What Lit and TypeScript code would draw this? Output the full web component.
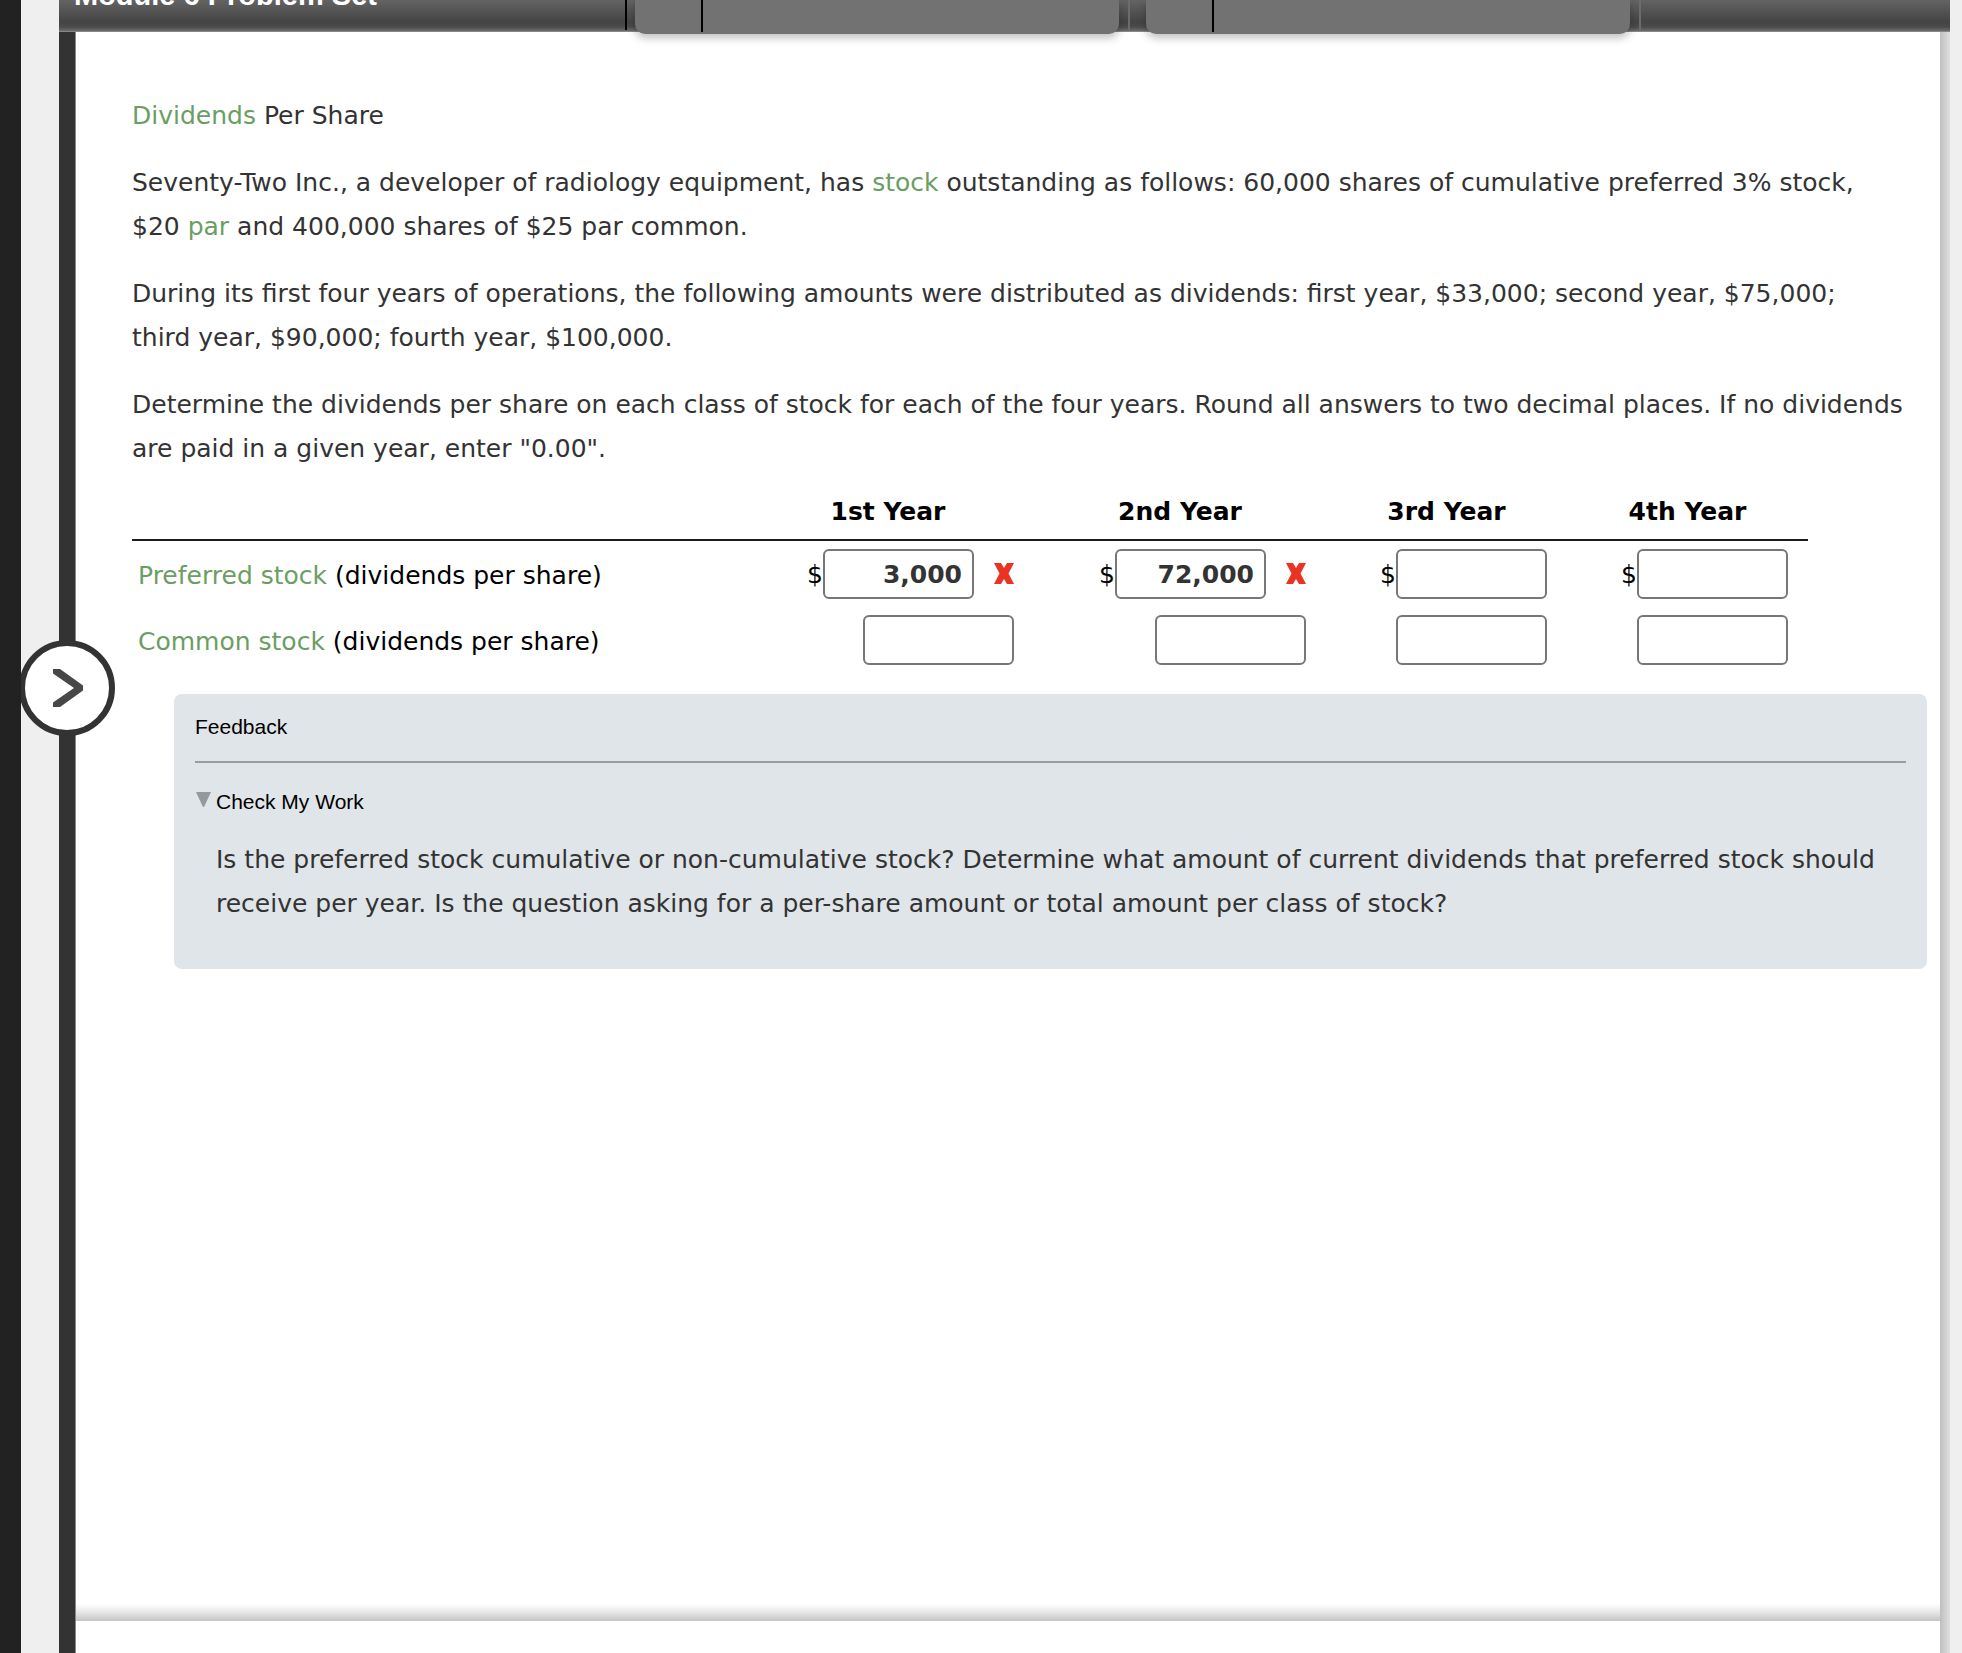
import { LitElement, html, css, svg, nothing } from "lit";
import { customElement, property } from "lit/decorators.js";

interface Answer {
  value: string;
  wrong: boolean;
}

interface Row {
  id: string;
  term: string;
  currency: boolean;
  answers: Answer[];
}

const YEARS = ["1st Year", "2nd Year", "3rd Year", "4th Year"];

const blank = (): Answer => ({ value: "", wrong: false });

const ROWS: Row[] = [
  {
    id: "preferred",
    term: "Preferred stock",
    currency: true,
    answers: [
      { value: "3,000", wrong: true },
      { value: "72,000", wrong: true },
      blank(),
      blank(),
    ],
  },
  {
    id: "common",
    term: "Common stock",
    currency: false,
    answers: [blank(), blank(), blank(), blank()],
  },
];

@customElement("assignment-header")
export class AssignmentHeader extends LitElement {
  static styles = css`
    :host {
      display: block;
    }
    .bar {
      display: flex;
      align-items: flex-start;
      height: 32px;
      background: linear-gradient(#636363 0, #444 22px, #4b4b4b 27px, #6e6e6e 31px, #a0a0a0 32px);
    }
    .title {
      box-sizing: border-box;
      flex: 0 0 568px;
      height: 30px;
      padding-left: 15px;
      border-right: 2px solid #000;
    }
    .title h1 {
      margin: -15px 0 0;
      color: #fff;
      font: bold 29px/20px "Liberation Sans", Arial, sans-serif;
      white-space: nowrap;
    }
    .tab {
      flex: 0 0 484px;
      height: 34px;
      margin-left: 8px;
      border-radius: 0 0 10px 10px;
      background: #727272;
      box-shadow: 0 4px 8px rgba(0, 0, 0, 0.25);
    }
    .tab-icon {
      box-sizing: border-box;
      width: 68px;
      height: 32px;
      border-right: 2px solid #000;
    }
    .divider {
      flex: 0 0 2px;
      height: 30px;
      margin: 0 8px 0 9px;
      background: #6c6c6c;
    }
  `;

  render() {
    return html`
      <header class="bar">
        <div class="title"><h1>Module 6 Problem Set</h1></div>
        <div class="tab"><div class="tab-icon"></div></div>
        <div class="divider"></div>
        <div class="tab"><div class="tab-icon"></div></div>
        <div class="divider"></div>
      </header>
    `;
  }
}

@customElement("answer-table")
export class AnswerTable extends LitElement {
  @property({ attribute: false }) rows: Row[] = [];

  static styles = css`
    :host {
      display: block;
    }
    .grid {
      width: 1676px;
      max-width: 100%;
      border-collapse: separate;
      border-spacing: 0;
      table-layout: fixed;
      color: #000;
      font: inherit;
    }
    .label-col {
      width: 610px;
    }
    .wide-col {
      width: 292px;
    }
    th {
      padding: 0;
    }
    .year {
      height: 48px;
      padding-bottom: 5px;
      border-bottom: 2px solid #1c1c1c;
      font-weight: bold;
      line-height: 44px;
      text-align: center;
      vertical-align: bottom;
    }
    .label {
      height: 62px;
      padding: 4px 0 0 6px;
      font-weight: normal;
      text-align: left;
    }
    .answer {
      height: 66px;
      padding: 0 20px 0 0;
    }
    .field {
      display: flex;
      align-items: center;
      justify-content: flex-end;
    }
    .currency {
      padding-top: 2px;
    }
    .input {
      box-sizing: border-box;
      width: 151px;
      height: 50px;
      padding: 0 10px;
      border: 2px solid #777;
      border-radius: 6px;
      background: #fff;
      color: #333;
      font: inherit;
      font-weight: bold;
      text-align: right;
    }
    .mark {
      width: 20px;
      height: 22px;
      margin-left: 20px;
    }
    a {
      color: #6a9e63;
      text-decoration: none;
    }
  `;

  private mark() {
    return html`<svg class="mark" viewBox="0 0 20 22" role="img" aria-label="Incorrect">
      ${svg`<path fill="#ea3323" d="M0 0H7L10 5L13 0H20L14.500 10.500L20 21H13L10 16L7 21H0L5.500 10.500Z" />`}
    </svg>`;
  }

  render() {
    return html`
      <table class="grid">
        <colgroup>
          <col class="label-col" />
          <col class="wide-col" />
          <col class="wide-col" />
          <col />
          <col />
        </colgroup>
        <thead>
          <tr>
            <td class="year"></td>
            ${YEARS.map((year) => html`<th class="year" scope="col">${year}</th>`)}
          </tr>
        </thead>
        <tbody>
          ${this.rows.map(
            (row) => html`<tr>
              <th class="label" scope="row"><a href="#${row.id}">${row.term}</a> (dividends per share)</th>
              ${row.answers.map(
                (answer, i) => html`<td class="answer">
                  <div class="field">
                    ${row.currency ? html`<label class="currency" for="${row.id}-${i}">$</label>` : nothing}
                    <input
                      class="input"
                      id="${row.id}-${i}"
                      type="text"
                      aria-label="${row.term}, ${YEARS[i]}"
                      .value=${answer.value}
                    />
                    ${answer.wrong ? this.mark() : nothing}
                  </div>
                </td>`
              )}
            </tr>`
          )}
        </tbody>
      </table>
    `;
  }
}

@customElement("feedback-panel")
export class FeedbackPanel extends LitElement {
  static styles = css`
    :host {
      display: block;
    }
    .panel {
      padding: 20px 21px 35px;
      border-radius: 8px;
      background: #e0e5e9;
    }
    .heading {
      margin: 0;
      padding-bottom: 21px;
      border-bottom: 2px solid #989da0;
      color: #000;
      font: 21px/26px "Liberation Sans", Arial, sans-serif;
    }
    .toggle {
      display: flex;
      align-items: center;
      gap: 5px;
      margin-top: 25px;
      padding: 0;
      border: 0;
      background: none;
      color: #000;
      font: 21px/28px "Liberation Sans", Arial, sans-serif;
    }
    .arrow {
      width: 16px;
      height: 16px;
      margin-bottom: 4px;
    }
    .text {
      margin: 22px 0 0;
      padding: 0 0 8px 21px;
    }
  `;

  render() {
    return html`
      <section class="panel">
        <h2 class="heading">Feedback</h2>
        <button class="toggle" type="button" aria-expanded="true">
          <svg class="arrow" viewBox="0 0 16 16" aria-hidden="true">
            <path fill="#949a9c" d="M1 0H16L9.500 14Q8.500 16 7.500 14Z" />
          </svg>
          Check My Work
        </button>
        <p class="text">
          Is the preferred stock cumulative or non-cumulative stock? Determine what amount of current dividends that
          preferred stock should receive per year. Is the question asking for a per-share amount or total amount per
          class of stock?
        </p>
      </section>
    `;
  }
}

@customElement("app-root")
export class AppRoot extends LitElement {
  static styles = css`
    :host {
      display: block;
      color: #333;
      font: 25px/44px Verdana, "DejaVu Sans", sans-serif;
    }
    .page {
      display: flex;
      min-height: 100vh;
      background: #efefef;
    }
    .rail {
      position: relative;
      z-index: 2;
      flex: 0 0 21px;
      background: #222;
    }
    .sheet {
      display: flex;
      flex: 1;
      flex-direction: column;
      min-width: 0;
      margin: 0 12px 0 38px;
    }
    .header {
      position: relative;
      z-index: 1;
    }
    .body {
      display: flex;
      flex: 1;
    }
    .spine {
      position: relative;
      flex: 0 0 16px;
      border-right: 1px solid #888;
      background: #333;
    }
    .expand {
      position: absolute;
      top: 608px;
      left: -40px;
      box-sizing: border-box;
      width: 96px;
      height: 96px;
      padding: 0;
      border: 6px solid #333;
      border-radius: 50%;
      background: #fff;
    }
    .chevron {
      display: block;
      width: 84px;
      height: 84px;
    }
    .column {
      display: flex;
      flex: 1;
      flex-direction: column;
      min-width: 0;
      background: #fff;
    }
    .edge {
      flex: 0 0 10px;
      background: linear-gradient(90deg, #bebebe, #e0e0e0);
    }
    .question {
      flex: 1;
      padding: 62px 13px 0 56px;
    }
    .question p {
      margin: 0 0 23px;
    }
    .question .last {
      margin-bottom: 14px;
    }
    .feedback {
      margin: 21px 0 40px 42px;
    }
    .fade {
      height: 17px;
      background: linear-gradient(#fff, #e6e6e6 50%, #c4c4c4);
    }
    .footer {
      height: 32px;
    }
    a {
      color: #6a9e63;
      text-decoration: none;
    }
  `;

  render() {
    return html`
      <div class="page">
        <div class="rail"></div>
        <div class="sheet">
          <assignment-header class="header"></assignment-header>
          <div class="body">
            <div class="spine">
              <button class="expand" type="button" aria-label="Expand navigation">
                <svg class="chevron" viewBox="0 0 84 84" aria-hidden="true">
                  <path fill="#474747" d="M28 23H35L58 39.500V44.500L35 61H28V56.500L49 42L28 27.500Z" />
                </svg>
              </button>
            </div>
            <main class="column">
              <div class="question">
                <p><a href="#dividends">Dividends</a> Per Share</p>
                <p>
                  Seventy-Two Inc., a developer of radiology equipment, has <a href="#stock">stock</a> outstanding as
                  follows: 60,000 shares of cumulative preferred 3% stock,<br />
                  $20 <a href="#par">par</a> and 400,000 shares of $25 par common.
                </p>
                <p>
                  During its first four years of operations, the following amounts were distributed as dividends: first
                  year, $33,000; second year, $75,000;<br />
                  third year, $90,000; fourth year, $100,000.
                </p>
                <p class="last">
                  Determine the dividends per share on each class of stock for each of the four years. Round all answers
                  to two decimal places. If no dividends are paid in a given year, enter "0.00".
                </p>
                <answer-table .rows=${ROWS}></answer-table>
                <feedback-panel class="feedback"></feedback-panel>
              </div>
              <div class="fade"></div>
              <div class="footer"></div>
            </main>
            <div class="edge"></div>
          </div>
        </div>
      </div>
    `;
  }
}
